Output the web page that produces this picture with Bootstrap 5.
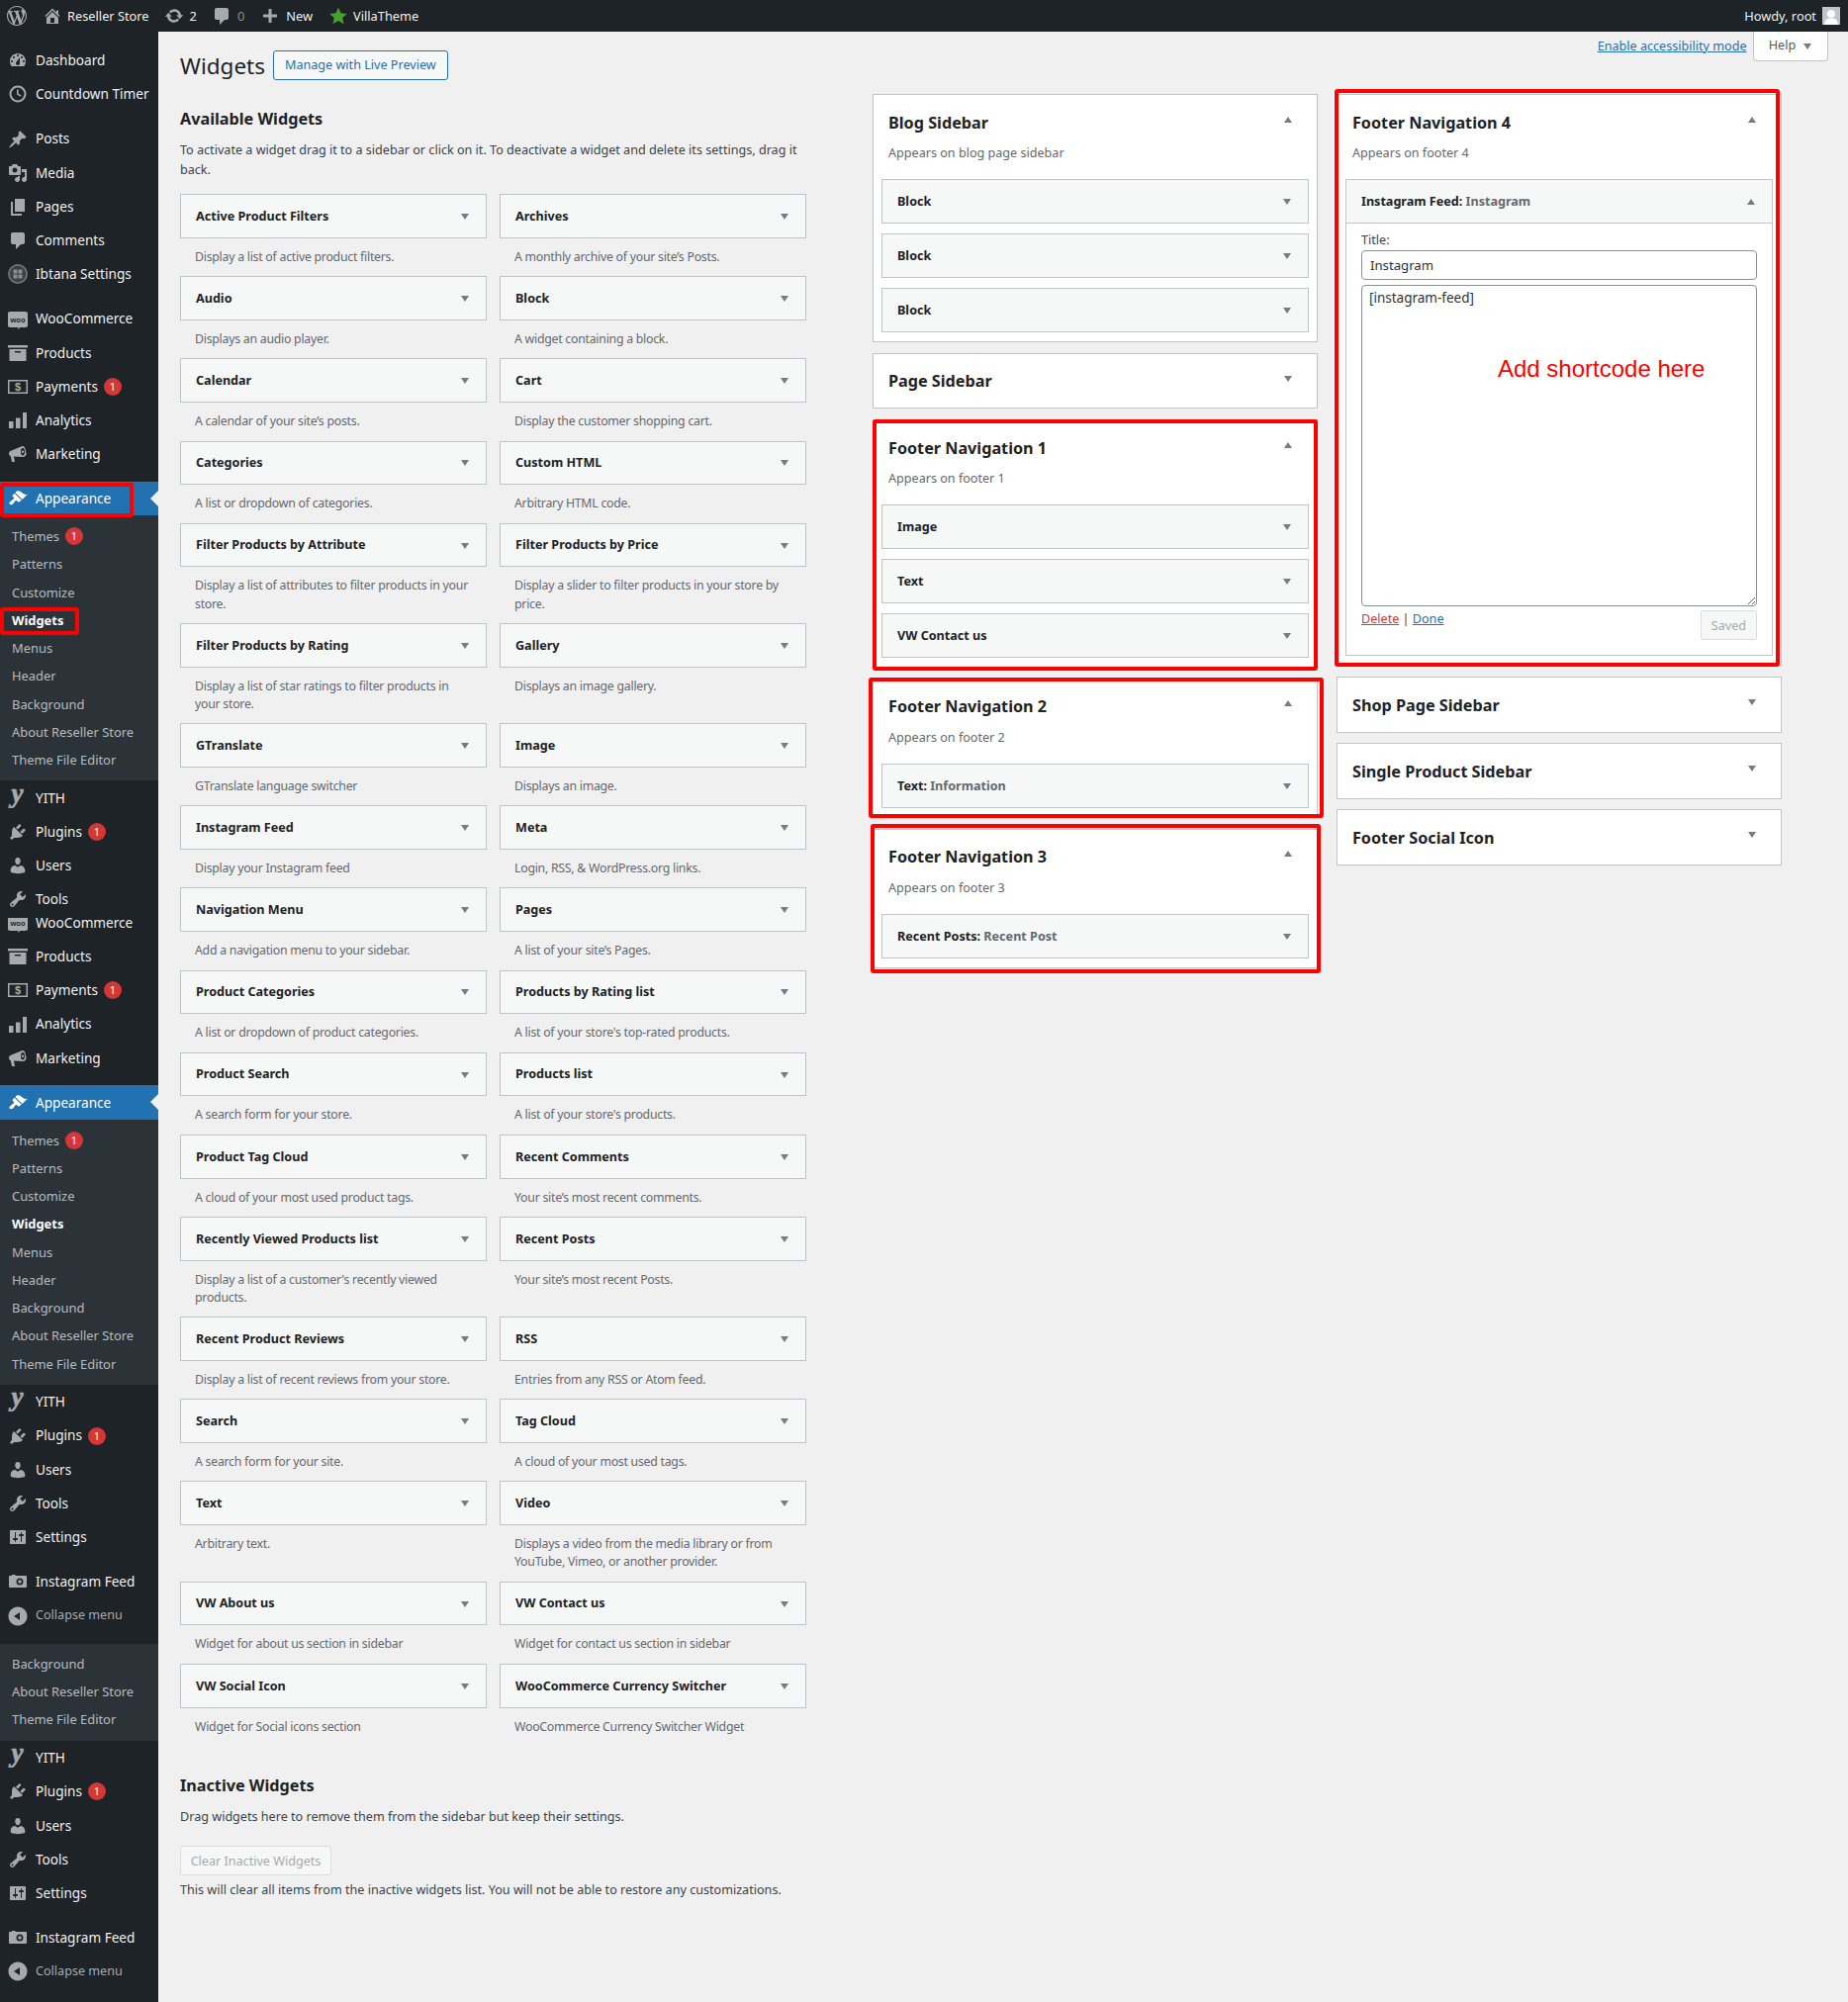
<!DOCTYPE html>
<html lang="en">

<head>
    <meta charset="UTF-8">
    <meta name="viewport" content="width=device-width, initial-scale=1">
    <title>Widgets</title>
    <link href="https://cdn.jsdelivr.net/npm/bootstrap@5.3.0/dist/css/bootstrap.min.css" rel="stylesheet">
    <style>
        body {
            font-family: "Noto Sans", "Open Sans", sans-serif;
            font-size: 12.6px;
            line-height: 18.2px;
            color: #3c434a;
            background-color: #f0f0f1;
        }

        /* top bar */
        .wp-bar {
            height: 32px;
            background: #1d2327;
            color: #f0f0f1;
            font-size: 12.8px;
        }

        .bar-ico {
            width: 20px;
            height: 20px;
            fill: #a7aaad;
        }

        .bar-star {
            fill: #46a02f;
        }

        .bar-dim {
            color: #8c8f94;
        }

        .bar-avatar {
            width: 18px;
            height: 18px;
            margin: 0 8px 0 6px;
        }

        .bl-5 { margin-left: 5px; }
        .bl-6 { margin-left: 6px; }
        .bl-7 { margin-left: 7px; }
        .bl-15 { margin-left: 15px; }
        .bl-16 { margin-left: 16px; }

        /* left menu */
        .wp-side {
            width: 160px;
            flex: none;
            background: #1d2327;
            padding-top: 11.6px;
            min-height: 1992px;
        }

        .mi {
            height: 34.2px;
            color: #f0f0f1;
            font-size: 13.6px;
            padding: 1px 0 0 8px;
            position: relative;
        }

        .mi svg {
            width: 20px;
            height: 20px;
            fill: #a7aaad;
            margin-right: 8px;
            flex: none;
        }

        .mi.is-open {
            background: #2271b1;
            color: #fff;
        }

        .mi.is-open svg {
            fill: #fff;
        }

        .mi.is-open::after {
            content: "";
            position: absolute;
            right: 0;
            top: 9px;
            border: 8px solid transparent;
            border-right-color: #f0f0f1;
            border-left-width: 0;
        }

        .mi-clip {
            height: 21.6px;
            margin-top: 2px;
            overflow: hidden;
        }

        .mi-clip .mi {
            flex: none;
            width: 100%;
        }

        .mi-sep {
            height: 11px;
        }

        .mi-gap {
            height: 11.4px;
        }

        .mi-small {
            font-size: 12.6px;
            color: #a7aaad;
        }

        .sub-menu {
            background: #2c3338;
            padding: 7px 0;
        }

        .sub-menu.is-cut {
            padding: 6px 0 7.4px;
        }

        .sub-item {
            height: 28.25px;
            padding-left: 12px;
            color: rgba(240, 246, 252, .7);
            font-size: 12.9px;
        }

        .sub-item.on {
            color: #fff;
            font-weight: 700;
        }

        .count-dot {
            width: 18px;
            height: 18px;
            border-radius: 50%;
            background: #d63638;
            color: #fff;
            font-size: 11px;
            line-height: 18px;
            text-align: center;
            margin-left: 6px;
        }

        /* page head */
        .page-head {
            height: 63px;
            padding-left: 22px;
        }

        .page-head h1 {
            font-size: 22.5px;
            font-weight: 400;
            line-height: 29px;
            margin: 19.5px 8px 0 0;
            color: #1d2327;
        }

        .live-btn {
            margin-top: 19px;
            height: 30px;
            padding: 0 11px;
            line-height: 28px;
            border: 1px solid #2271b1;
            border-radius: 3px;
            color: #2271b1;
            background: #f6f7f7;
        }

        .access-link {
            margin: 4.5px 6px 0 0;
            line-height: 20px;
            color: #2271b1;
        }

        .help-tab {
            width: 76px;
            height: 30px;
            margin-right: 20.5px;
            background: #fff;
            border: 1px solid #c3c4c7;
            border-top: 0;
            border-radius: 0 0 4px 4px;
            color: #50575e;
        }

        /* available widgets */
        .avail-col {
            width: 633px;
            margin-left: 22px;
            flex: none;
        }

        .block-title {
            font-size: 16.2px;
            font-weight: 700;
            line-height: 20px;
            color: #1d2327;
            margin: 15px 0 11px;
        }

        .block-text {
            line-height: 20px;
            margin: 0;
            padding-top: 1px;
            margin-bottom: -1px;
        }

        .avail-grid {
            display: grid;
            grid-template-columns: 310px 310px;
            column-gap: 13px;
            margin-top: 15.3px;
        }

        .wg-bar {
            height: 44.8px;
            padding: 1px 17px 0 15px;
            background: #f6f7f7;
            border: 1px solid #c3c4c7;
            font-weight: 700;
            color: #1d2327;
        }

        .wg-bar em {
            font-style: normal;
            color: #646970;
        }

        .wg-desc {
            margin: 0;
            padding: 10px 4px 10.1px 15px;
            color: #646970;
            font-size: 12.3px;
            letter-spacing: -.25px;
        }

        .tri-dn,
        .tri-up {
            width: 0;
            height: 0;
            border-left: 4px solid transparent;
            border-right: 4px solid transparent;
            flex: none;
        }

        .tri-dn {
            border-top: 6px solid #787c82;
        }

        .tri-up {
            border-bottom: 6px solid #787c82;
        }

        .tall-p {
            margin-top: 30.4px;
        }

        .clear-btn,
        .saved-btn {
            height: 29.7px;
            line-height: 27.7px;
            font-size: 12.6px;
            border: 1px solid #dcdcde;
            border-radius: 3px;
            background: #f6f7f7;
            color: #a7aaad;
        }

        .clear-btn {
            width: 153px;
            margin: 20px 0 4px;
        }

        /* sidebars */
        .sb-col {
            width: 449.6px;
            flex: none;
        }

        .sb-col.first {
            margin-left: 67px;
        }

        .sb-col.second {
            margin-left: 19.4px;
        }

        .sb-box {
            position: relative;
            background: #fff;
            border: 1px solid #c3c4c7;
            margin-bottom: 10.8px;
        }

        .sb-head {
            height: 54.3px;
            padding: 1px 25px 0 15px;
            font-size: 16.2px;
            font-weight: 700;
            color: #1d2327;
        }

        .sb-head i {
            margin-top: -6px;
        }

        .sb-note {
            margin: -4px 0 16.5px;
            padding-left: 15px;
            color: #646970;
        }

        .sb-list {
            padding: 0 8px;
        }

        .sb-list .wg-bar {
            margin-bottom: 10.2px;
        }

        .sb-list .wg-bar:last-child {
            margin-bottom: 9.3px;
        }

        .red-frame {
            position: absolute;
            border: 4px solid #f00;
            border-radius: 3px;
            pointer-events: none;
        }

        .red-side-a {
            left: 0;
            top: 455.5px;
            width: 135px;
            height: 35px;
        }

        .red-side-b {
            left: 0;
            top: 582px;
            width: 80px;
            height: 28px;
        }

        .rf-1 { top: -1px; left: -1px; right: -1px; bottom: -4px; }
        .rf-2 { top: -2px; left: -5px; right: -7px; bottom: -1px; }
        .rf-3 { top: -6px; left: -3px; right: -4px; bottom: -6px; }
        .rf-4 { top: -6px; left: -3px; right: 1px; bottom: -2px; }

        /* open widget */
        .iw-head {
            margin-bottom: 0 !important;
        }

        .iw-list {
            padding-bottom: 9.8px;
        }

        .iw-body {
            padding: 7.3px 15px 15px;
            border: 1px solid #c3c4c7;
            border-top: 0;
        }

        .iw-body label {
            padding-top: 1px;
            margin-bottom: -1px;
        }

        .iw-field {
            display: block;
            width: 100%;
            color: #2c3338;
            border: 1px solid #8c8f94;
            border-radius: 4px;
            font-family: inherit;
        }

        input.iw-field {
            height: 29.4px;
            padding: 0 8px;
            margin: 1px 0 5.6px;
            font-size: 13.2px;
        }

        .area-wrap {
            position: relative;
        }

        textarea.iw-field {
            height: 325px;
            padding: 3px 7px;
            line-height: 18px;
            font-size: 13.5px;
        }

        .shortcode-tip {
            position: absolute;
            left: 138px;
            top: 69px;
            font-family: "Liberation Sans", Arial, sans-serif;
            font-size: 24px;
            line-height: 32px;
            color: #f00;
            white-space: nowrap;
        }

        .iw-actions {
            margin-top: 3.7px;
        }

        .del-link {
            color: #d63638;
        }

        .done-link {
            color: #2271b1;
        }

        .saved-btn {
            width: 56.4px;
        }
    </style>
</head>

<body>
    <svg width="0" height="0" class="position-absolute">
        <defs>
            <symbol id="i-wp" viewBox="0 0 20 20"><path d="M20 10c0-5.51-4.49-10-10-10C4.48 0 0 4.49 0 10c0 5.52 4.48 10 10 10 5.51 0 10-4.48 10-10zM7.78 15.37L4.37 6.22c.55-.02 1.17-.08 1.17-.08.5-.06.44-1.13-.06-1.11 0 0-1.45.11-2.37.11-.18 0-.37 0-.58-.01C4.12 2.69 6.87 1.11 10 1.11c2.33 0 4.45.87 6.05 2.34-.68-.11-1.65.39-1.65 1.58 0 .74.45 1.36.9 2.1.35.61.55 1.36.55 2.46 0 1.49-1.4 5-1.4 5l-3.03-8.37c.54-.02.82-.17.82-.17.5-.05.44-1.25-.06-1.22 0 0-1.44.12-2.38.12-.87 0-2.33-.12-2.33-.12-.5-.03-.56 1.2-.06 1.22l.92.08 1.26 3.41zM17.41 10c.24-.64.74-1.87.43-4.25.7 1.29 1.05 2.71 1.05 4.25 0 3.29-1.73 6.24-4.4 7.78.97-2.59 1.94-5.2 2.92-7.78zM6.1 18.09C3.12 16.65 1.11 13.53 1.11 10c0-1.3.23-2.48.72-3.59C3.25 10.3 4.67 14.2 6.1 18.09zm4.03-6.63l2.58 6.98c-.86.29-1.76.45-2.71.45-.79 0-1.57-.11-2.29-.33.81-2.38 1.62-4.74 2.42-7.1z"/></symbol>
            <symbol id="i-home" viewBox="0 0 20 20"><path d="M16 8.5l1.53 1.53-1.06 1.06L10 4.62l-6.47 6.47-1.06-1.06L10 2.5l4 4v-2h2v4zm-6-2.46l6 5.99V18H4v-5.97zM12 17v-5H8v5h4z"/></symbol>
            <symbol id="i-update" viewBox="0 0 20 20"><path d="M10.2 3.28c3.53 0 6.43 2.61 6.92 6h2.08l-3.5 4-3.5-4h2.32c-.45-1.97-2.21-3.45-4.32-3.45-1.45 0-2.73.71-3.54 1.78L4.95 5.66C6.23 4.2 8.11 3.28 10.2 3.28zm-.4 13.44c-3.52 0-6.43-2.61-6.92-6H.8l3.5-4c1.17 1.33 2.33 2.67 3.5 4H5.48c.45 1.97 2.21 3.45 4.32 3.45 1.45 0 2.73-.71 3.54-1.78l1.71 1.95c-1.28 1.46-3.15 2.38-5.25 2.38z"/></symbol>
            <symbol id="i-comment" viewBox="0 0 20 20"><path d="M5 2h10c1.1 0 2 .9 2 2v8c0 1.1-.9 2-2 2h-2l-5 5v-5H5c-1.1 0-2-.9-2-2V4c0-1.1.9-2 2-2z"/></symbol>
            <symbol id="i-plus" viewBox="0 0 20 20"><path d="M17 8.5v3h-5.5V17h-3v-5.5H3v-3h5.5V3h3v5.5z"/></symbol>
            <symbol id="i-star" viewBox="0 0 20 20"><path d="M10 1.5l2.6 5.7 6.2.7-4.6 4.2 1.3 6.1L10 15.1l-5.5 3.1 1.3-6.1L1.2 7.900l6.2-.7z"/></symbol>
            <symbol id="i-dash" viewBox="0 0 20 20"><path fill-rule="evenodd" d="M3.76 16h12.48c1.1-1.37 1.76-3.11 1.76-5 0-4.42-3.58-8-8-8s-8 3.58-8 8c0 1.89.66 3.63 1.76 5zM10 4c.55 0 1 .45 1 1s-.45 1-1 1-1-.45-1-1 .45-1 1-1zM6 6c.55 0 1 .45 1 1s-.45 1-1 1-1-.45-1-1 .45-1 1-1zm8 0c.55 0 1 .45 1 1s-.45 1-1 1-1-.45-1-1 .45-1 1-1zm-5.37 5.55L12 7v6c0 1.1-.9 2-2 2s-2-.9-2-2c0-.57.24-1.08.63-1.45zM4 10c.55 0 1 .45 1 1s-.45 1-1 1-1-.45-1-1 .45-1 1-1zm12 0c.55 0 1 .45 1 1s-.45 1-1 1-1-.45-1-1 .45-1 1-1z"/></symbol>
            <symbol id="i-clock" viewBox="0 0 20 20"><path fill-rule="evenodd" d="M10 1.5a8.5 8.5 0 1 1 0 17 8.5 8.5 0 0 1 0-17zm0 2a6.5 6.5 0 1 0 0 13 6.5 6.5 0 0 0 0-13zM9 5.500h1.600v4.200l3 1.800-.8 1.300L9 10.500z"/></symbol>
            <symbol id="i-pin" viewBox="0 0 20 20"><path d="M10.44 3.02l1.82-1.82 6.36 6.35-1.83 1.82c-1.05-.68-2.48-.57-3.41.36l-.75.75c-.92.93-1.04 2.35-.35 3.41l-1.83 1.82-2.41-2.41-2.8 2.79c-.42.42-3.38 2.71-3.8 2.29s1.86-3.39 2.28-3.81l2.79-2.79L4.1 9.36l1.83-1.82c1.05.69 2.48.57 3.4-.36l.75-.75c.93-.92 1.05-2.35.36-3.41z"/></symbol>
            <symbol id="i-media" viewBox="0 0 20 20"><path fill-rule="evenodd" d="M13 11V4c0-.55-.45-1-1-1h-1.67L9 1H5L3.67 3H2c-.55 0-1 .45-1 1v7c0 .55.45 1 1 1h10c.55 0 1-.45 1-1zM7 4.5c1.38 0 2.5 1.12 2.5 2.5S8.38 9.5 7 9.5 4.5 8.38 4.5 7 5.62 4.5 7 4.5zM14 6h5v10.5c0 1.38-1.12 2.5-2.5 2.5S14 17.88 14 16.5s1.12-2.5 2.5-2.5c.17 0 .34.02.5.05V9h-3V6zm-4 8.05V13h2v3.5c0 1.38-1.12 2.5-2.5 2.5S7 17.88 7 16.5 8.12 14 9.5 14c.17 0 .34.02.5.05z"/></symbol>
            <symbol id="i-pages" viewBox="0 0 20 20"><path d="M7 2h10v13H7zM5 5v12h9v2H3V5z"/></symbol>
            <symbol id="i-ibtana" viewBox="0 0 20 20"><circle cx="10" cy="10" r="10" fill="#6f7478"/><circle cx="10" cy="10" r="8.2" fill="#3a4045"/><path fill="#8b8f93" d="M5.5 5.5h4v4h-4zm5 0h4v4h-4zm-5 5h4v4h-4zm5 0h4v4h-4z"/></symbol>
            <symbol id="i-woo" viewBox="0 0 20 20"><path d="M2 2h16c1.1 0 2 .9 2 2v12c0 1.1-.9 2-2 2h-6l-1.5 2L10 18H2c-1.1 0-2-.9-2-2V4c0-1.1.9-2 2-2z"/><text x="10" y="12.5" text-anchor="middle" font-family="Liberation Sans, sans-serif" font-size="7.5" font-weight="700" fill="#1d2327">woo</text></symbol>
            <symbol id="i-box" viewBox="0 0 20 20"><path fill-rule="evenodd" d="M0 2h20v2.5H0zM1.5 6h17v12h-17zM7 8v1.5h6V8z"/></symbol>
            <symbol id="i-pay" viewBox="0 0 20 20"><path fill-rule="evenodd" d="M0 3h20v14H0zm1.5 1.5v11h17v-11z"/><text x="10" y="14" text-anchor="middle" font-family="Liberation Sans, sans-serif" font-size="11" font-weight="700">$</text></symbol>
            <symbol id="i-bars" viewBox="0 0 20 20"><path d="M1 11h4.5v7H1zM8 7.5h4.5V18H8zM15 2h4v16h-4z"/></symbol>
            <symbol id="i-horn" viewBox="0 0 20 20"><path fill-rule="evenodd" d="M18 7.5a3.5 3.5 0 0 1-3 5.5L6 12.5l1 5.5H4l-1.200-5.800C1.700 11.800 1 10.800 1 9.500s.8-2.400 2-2.800L14 2.200c1.500-.6 3 .7 3.600 2.700.2.900.4 1.700.4 2.600zM15 4c-1.200 0-2 1.600-2 3.800s.8 3.700 2 3.700 2-1.500 2-3.700S16.200 4 15 4z"/><circle cx="15" cy="7.8" r="1.2"/></symbol>
            <symbol id="i-brush" viewBox="0 0 20 20"><path d="M14.48 11.06L7.41 3.99l1.5-1.5c.5-.56 2.3-.47 3.51.32 1.21.8 1.43 1.28 2.91 2.1 1.18.64 2.45 1.26 4.45.85zm-.71.71L6.7 4.7 4.93 6.47c-.39.39-.39 1.02 0 1.41l1.06 1.06c.39.39.39 1.03 0 1.42-.6.6-1.43 1.11-2.21 1.69-.35.26-.7.53-1.01.84C1.43 13.23.99 14.8 1.6 15.5c.6.7 2.15 1.28 3.48-.05.32-.31.58-.66.84-1.01.58-.78 1.09-1.61 1.69-2.21.39-.39 1.02-.39 1.41 0l1.06 1.06c.39.39 1.02.39 1.41 0z"/></symbol>
            <symbol id="i-yith" viewBox="0 0 20 20"><text x="9.5" y="13.5" text-anchor="middle" font-family="Liberation Serif, serif" font-size="27" font-weight="700" font-style="italic" stroke="#a7aaad" stroke-width=".7">y</text></symbol>
            <symbol id="i-plug" viewBox="0 0 20 20"><path d="M13.11 4.36L9.87 7.6 8 5.73l3.24-3.24c.35-.34 1.05-.2 1.56.32.52.51.66 1.21.31 1.55zm-8 1.77l.91-1.12 9.01 9.01-1.19.84c-.71.71-2.63 1.16-3.82 1.16H6.14L4.9 17.26c-.59.59-1.54.59-2.12 0-.59-.58-.59-1.53 0-2.12l1.24-1.24v-3.88c0-1.13.4-3.19 1.09-3.89zm7.26 3.97l3.24-3.24c.34-.35 1.04-.21 1.55.31.52.51.66 1.21.31 1.55l-3.24 3.25z"/></symbol>
            <symbol id="i-user" viewBox="0 0 20 20"><path d="M10 9.25c-2.27 0-2.73-3.44-2.73-3.44C7 4.02 7.82 2 9.97 2c2.16 0 2.98 2.02 2.71 3.81 0 0-.41 3.44-2.68 3.44zm0 2.57L12.72 10c2.39 0 4.52 2.33 4.52 4.53v2.49s-3.65 1.13-7.24 1.13c-3.65 0-7.24-1.13-7.24-1.13v-2.49c0-2.25 1.94-4.48 4.47-4.48z"/></symbol>
            <symbol id="i-tool" viewBox="0 0 20 20"><path fill-rule="evenodd" d="M16.68 9.77c-1.34 1.34-3.3 1.67-4.95.99l-5.41 6.52c-.99.99-2.59.99-3.58 0s-.99-2.59 0-3.57l6.52-5.42c-.68-1.65-.35-3.61.99-4.95 1.28-1.28 3.12-1.62 4.72-1.06l-2.89 2.89 2.82 2.82 2.86-2.87c.53 1.58.18 3.39-1.08 4.65zM3.81 16.21c.4.39 1.04.39 1.43 0 .4-.4.4-1.04 0-1.43-.39-.4-1.03-.4-1.43 0-.39.39-.39 1.03 0 1.43z"/></symbol>
            <symbol id="i-set" viewBox="0 0 20 20"><path fill-rule="evenodd" d="M18 16V4c0-.55-.45-1-1-1H3c-.55 0-1 .45-1 1v12c0 .55.45 1 1 1h14c.55 0 1-.45 1-1zM8 11h1c.55 0 1 .45 1 1s-.45 1-1 1H8v1.5c0 .28-.22.5-.5.5s-.5-.22-.5-.5V13H6c-.55 0-1-.45-1-1s.45-1 1-1h1V5.5c0-.28.22-.5.5-.5s.5.22.5.5V11zm5-2h-1c-.55 0-1-.45-1-1s.45-1 1-1h1V5.5c0-.28.22-.5.5-.5s.5.22.5.5V7h1c.55 0 1 .45 1 1s-.45 1-1 1h-1v5.5c0 .28-.22.5-.5.5s-.5-.22-.5-.5V9z"/></symbol>
            <symbol id="i-cam" viewBox="0 0 20 20"><path fill-rule="evenodd" d="M2 4h2V3h3l1 1h10c.6 0 1 .4 1 1v10c0 .6-.4 1-1 1H2c-.6 0-1-.4-1-1V5c0-.6.4-1 1-1zm10 2.5a3.5 3.5 0 1 0 0 7 3.5 3.5 0 0 0 0-7z"/><circle cx="12" cy="10" r="1.8"/></symbol>
            <symbol id="i-back" viewBox="0 0 20 20"><path fill-rule="evenodd" d="M10 .5c5.22 0 9.5 4.28 9.5 9.5s-4.28 9.5-9.5 9.5S.5 15.22.5 10 4.78.5 10 .5zM12 14V6l-6 4z"/></symbol>
        </defs>
    </svg>

    <!-- top admin bar -->
    <div class="wp-bar d-flex align-items-center">
        <svg class="bar-ico bl-7"><use href="#i-wp"/></svg>
        <svg class="bar-ico bl-16"><use href="#i-home"/></svg>
        <span class="bl-5">Reseller Store</span>
        <svg class="bar-ico bl-15"><use href="#i-update"/></svg>
        <span class="bl-6">2</span>
        <svg class="bar-ico bl-15"><use href="#i-comment"/></svg>
        <span class="bar-dim bl-6">0</span>
        <svg class="bar-ico bl-16"><use href="#i-plus"/></svg>
        <span class="bl-6">New</span>
        <svg class="bar-ico bar-star bl-16"><use href="#i-star"/></svg>
        <span class="bl-5">VillaTheme</span>
        <span class="ms-auto">Howdy, root</span>
        <svg class="bar-avatar" viewBox="0 0 18 18"><rect width="18" height="18" fill="#c3c4c7"/><circle cx="9" cy="7" r="4" fill="#fff"/><path d="M2 18c0-5 3-6.5 7-6.5s7 1.5 7 6.5z" fill="#fff"/></svg>
    </div>

    <div class="d-flex position-relative">
        <!-- left menu -->
        <nav class="wp-side">
            <div class="mi d-flex align-items-center"><svg><use href="#i-dash"/></svg>Dashboard</div>
            <div class="mi d-flex align-items-center"><svg><use href="#i-clock"/></svg>Countdown Timer</div>
            <div class="mi-sep"></div>
            <div class="mi d-flex align-items-center"><svg><use href="#i-pin"/></svg>Posts</div>
            <div class="mi d-flex align-items-center"><svg><use href="#i-media"/></svg>Media</div>
            <div class="mi d-flex align-items-center"><svg><use href="#i-pages"/></svg>Pages</div>
            <div class="mi d-flex align-items-center"><svg><use href="#i-comment"/></svg>Comments</div>
            <div class="mi d-flex align-items-center"><svg><use href="#i-ibtana"/></svg>Ibtana Settings</div>
            <div class="mi-sep"></div>
            <div class="mi d-flex align-items-center"><svg><use href="#i-woo"/></svg>WooCommerce</div>
            <div class="mi d-flex align-items-center"><svg><use href="#i-box"/></svg>Products</div>
            <div class="mi d-flex align-items-center"><svg><use href="#i-pay"/></svg>Payments<span class="count-dot">1</span></div>
            <div class="mi d-flex align-items-center"><svg><use href="#i-bars"/></svg>Analytics</div>
            <div class="mi d-flex align-items-center"><svg><use href="#i-horn"/></svg>Marketing</div>
            <div class="mi-sep"></div>
            <div class="mi is-open d-flex align-items-center"><svg><use href="#i-brush"/></svg>Appearance</div>
            <div class="sub-menu">
                <div class="sub-item d-flex align-items-center">Themes<span class="count-dot">1</span></div>
                <div class="sub-item d-flex align-items-center">Patterns</div>
                <div class="sub-item d-flex align-items-center">Customize</div>
                <div class="sub-item on d-flex align-items-center">Widgets</div>
                <div class="sub-item d-flex align-items-center">Menus</div>
                <div class="sub-item d-flex align-items-center">Header</div>
                <div class="sub-item d-flex align-items-center">Background</div>
                <div class="sub-item d-flex align-items-center">About Reseller Store</div>
                <div class="sub-item d-flex align-items-center">Theme File Editor</div>
            </div>
            <div class="mi d-flex align-items-center"><svg><use href="#i-yith"/></svg>YITH</div>
            <div class="mi d-flex align-items-center"><svg><use href="#i-plug"/></svg>Plugins<span class="count-dot">1</span></div>
            <div class="mi d-flex align-items-center"><svg><use href="#i-user"/></svg>Users</div>
            <div class="mi d-flex align-items-center"><svg><use href="#i-tool"/></svg>Tools</div>

            <!-- the screenshot is stitched here, the next row is cut off at the top -->
            <div class="mi-clip d-flex align-items-end">
                <div class="mi d-flex align-items-center"><svg><use href="#i-woo"/></svg>WooCommerce</div>
            </div>
            <div class="mi d-flex align-items-center"><svg><use href="#i-box"/></svg>Products</div>
            <div class="mi d-flex align-items-center"><svg><use href="#i-pay"/></svg>Payments<span class="count-dot">1</span></div>
            <div class="mi d-flex align-items-center"><svg><use href="#i-bars"/></svg>Analytics</div>
            <div class="mi d-flex align-items-center"><svg><use href="#i-horn"/></svg>Marketing</div>
            <div class="mi-sep"></div>
            <div class="mi is-open d-flex align-items-center"><svg><use href="#i-brush"/></svg>Appearance</div>
            <div class="sub-menu">
                <div class="sub-item d-flex align-items-center">Themes<span class="count-dot">1</span></div>
                <div class="sub-item d-flex align-items-center">Patterns</div>
                <div class="sub-item d-flex align-items-center">Customize</div>
                <div class="sub-item on d-flex align-items-center">Widgets</div>
                <div class="sub-item d-flex align-items-center">Menus</div>
                <div class="sub-item d-flex align-items-center">Header</div>
                <div class="sub-item d-flex align-items-center">Background</div>
                <div class="sub-item d-flex align-items-center">About Reseller Store</div>
                <div class="sub-item d-flex align-items-center">Theme File Editor</div>
            </div>
            <div class="mi d-flex align-items-center"><svg><use href="#i-yith"/></svg>YITH</div>
            <div class="mi d-flex align-items-center"><svg><use href="#i-plug"/></svg>Plugins<span class="count-dot">1</span></div>
            <div class="mi d-flex align-items-center"><svg><use href="#i-user"/></svg>Users</div>
            <div class="mi d-flex align-items-center"><svg><use href="#i-tool"/></svg>Tools</div>
            <div class="mi d-flex align-items-center"><svg><use href="#i-set"/></svg>Settings</div>
            <div class="mi-sep"></div>
            <div class="mi d-flex align-items-center"><svg><use href="#i-cam"/></svg>Instagram Feed</div>
            <div class="mi mi-small d-flex align-items-center"><svg><use href="#i-back"/></svg>Collapse menu</div>
            <div class="mi-gap"></div>

            <div class="sub-menu is-cut">
                <div class="sub-item d-flex align-items-center">Background</div>
                <div class="sub-item d-flex align-items-center">About Reseller Store</div>
                <div class="sub-item d-flex align-items-center">Theme File Editor</div>
            </div>
            <div class="mi d-flex align-items-center"><svg><use href="#i-yith"/></svg>YITH</div>
            <div class="mi d-flex align-items-center"><svg><use href="#i-plug"/></svg>Plugins<span class="count-dot">1</span></div>
            <div class="mi d-flex align-items-center"><svg><use href="#i-user"/></svg>Users</div>
            <div class="mi d-flex align-items-center"><svg><use href="#i-tool"/></svg>Tools</div>
            <div class="mi d-flex align-items-center"><svg><use href="#i-set"/></svg>Settings</div>
            <div class="mi-sep"></div>
            <div class="mi d-flex align-items-center"><svg><use href="#i-cam"/></svg>Instagram Feed</div>
            <div class="mi mi-small d-flex align-items-center"><svg><use href="#i-back"/></svg>Collapse menu</div>
        </nav>

        <!-- annotations on the menu -->
        <div class="red-frame red-side-a"></div>
        <div class="red-frame red-side-b"></div>

        <main class="flex-grow-1">
            <div class="page-head d-flex align-items-start">
                <h1>Widgets</h1>
                <a class="live-btn text-decoration-none">Manage with Live Preview</a>
                <a class="access-link ms-auto" href="#">Enable accessibility mode</a>
                <div class="help-tab d-flex align-items-center justify-content-center gap-2">Help <i class="tri-dn"></i></div>
            </div>

            <div class="d-flex align-items-start">
                <div class="avail-col">
                    <h2 class="block-title">Available Widgets</h2>
                    <p class="block-text">To activate a widget drag it to a sidebar or click on it. To deactivate a widget and delete its settings, drag it<br>back.</p>

                    <div class="avail-grid">
                        <div><div class="wg-bar d-flex align-items-center justify-content-between">Active Product Filters<i class="tri-dn"></i></div><p class="wg-desc">Display a list of active product filters.</p></div>
                        <div><div class="wg-bar d-flex align-items-center justify-content-between">Archives<i class="tri-dn"></i></div><p class="wg-desc">A monthly archive of your site’s Posts.</p></div>
                        <div><div class="wg-bar d-flex align-items-center justify-content-between">Audio<i class="tri-dn"></i></div><p class="wg-desc">Displays an audio player.</p></div>
                        <div><div class="wg-bar d-flex align-items-center justify-content-between">Block<i class="tri-dn"></i></div><p class="wg-desc">A widget containing a block.</p></div>
                        <div><div class="wg-bar d-flex align-items-center justify-content-between">Calendar<i class="tri-dn"></i></div><p class="wg-desc">A calendar of your site’s posts.</p></div>
                        <div><div class="wg-bar d-flex align-items-center justify-content-between">Cart<i class="tri-dn"></i></div><p class="wg-desc">Display the customer shopping cart.</p></div>
                        <div><div class="wg-bar d-flex align-items-center justify-content-between">Categories<i class="tri-dn"></i></div><p class="wg-desc">A list or dropdown of categories.</p></div>
                        <div><div class="wg-bar d-flex align-items-center justify-content-between">Custom HTML<i class="tri-dn"></i></div><p class="wg-desc">Arbitrary HTML code.</p></div>
                        <div><div class="wg-bar d-flex align-items-center justify-content-between">Filter Products by Attribute<i class="tri-dn"></i></div><p class="wg-desc">Display a list of attributes to filter products in your<br>store.</p></div>
                        <div><div class="wg-bar d-flex align-items-center justify-content-between">Filter Products by Price<i class="tri-dn"></i></div><p class="wg-desc">Display a slider to filter products in your store by<br>price.</p></div>
                        <div><div class="wg-bar d-flex align-items-center justify-content-between">Filter Products by Rating<i class="tri-dn"></i></div><p class="wg-desc">Display a list of star ratings to filter products in<br>your store.</p></div>
                        <div><div class="wg-bar d-flex align-items-center justify-content-between">Gallery<i class="tri-dn"></i></div><p class="wg-desc">Displays an image gallery.</p></div>
                        <div><div class="wg-bar d-flex align-items-center justify-content-between">GTranslate<i class="tri-dn"></i></div><p class="wg-desc">GTranslate language switcher</p></div>
                        <div><div class="wg-bar d-flex align-items-center justify-content-between">Image<i class="tri-dn"></i></div><p class="wg-desc">Displays an image.</p></div>
                        <div><div class="wg-bar d-flex align-items-center justify-content-between">Instagram Feed<i class="tri-dn"></i></div><p class="wg-desc">Display your Instagram feed</p></div>
                        <div><div class="wg-bar d-flex align-items-center justify-content-between">Meta<i class="tri-dn"></i></div><p class="wg-desc">Login, RSS, &amp; WordPress.org links.</p></div>
                        <div><div class="wg-bar d-flex align-items-center justify-content-between">Navigation Menu<i class="tri-dn"></i></div><p class="wg-desc">Add a navigation menu to your sidebar.</p></div>
                        <div><div class="wg-bar d-flex align-items-center justify-content-between">Pages<i class="tri-dn"></i></div><p class="wg-desc">A list of your site’s Pages.</p></div>
                        <div><div class="wg-bar d-flex align-items-center justify-content-between">Product Categories<i class="tri-dn"></i></div><p class="wg-desc">A list or dropdown of product categories.</p></div>
                        <div><div class="wg-bar d-flex align-items-center justify-content-between">Products by Rating list<i class="tri-dn"></i></div><p class="wg-desc">A list of your store's top-rated products.</p></div>
                        <div><div class="wg-bar d-flex align-items-center justify-content-between">Product Search<i class="tri-dn"></i></div><p class="wg-desc">A search form for your store.</p></div>
                        <div><div class="wg-bar d-flex align-items-center justify-content-between">Products list<i class="tri-dn"></i></div><p class="wg-desc">A list of your store's products.</p></div>
                        <div><div class="wg-bar d-flex align-items-center justify-content-between">Product Tag Cloud<i class="tri-dn"></i></div><p class="wg-desc">A cloud of your most used product tags.</p></div>
                        <div><div class="wg-bar d-flex align-items-center justify-content-between">Recent Comments<i class="tri-dn"></i></div><p class="wg-desc">Your site’s most recent comments.</p></div>
                        <div><div class="wg-bar d-flex align-items-center justify-content-between">Recently Viewed Products list<i class="tri-dn"></i></div><p class="wg-desc">Display a list of a customer's recently viewed<br>products.</p></div>
                        <div><div class="wg-bar d-flex align-items-center justify-content-between">Recent Posts<i class="tri-dn"></i></div><p class="wg-desc">Your site’s most recent Posts.</p></div>
                        <div><div class="wg-bar d-flex align-items-center justify-content-between">Recent Product Reviews<i class="tri-dn"></i></div><p class="wg-desc">Display a list of recent reviews from your store.</p></div>
                        <div><div class="wg-bar d-flex align-items-center justify-content-between">RSS<i class="tri-dn"></i></div><p class="wg-desc">Entries from any RSS or Atom feed.</p></div>
                        <div><div class="wg-bar d-flex align-items-center justify-content-between">Search<i class="tri-dn"></i></div><p class="wg-desc">A search form for your site.</p></div>
                        <div><div class="wg-bar d-flex align-items-center justify-content-between">Tag Cloud<i class="tri-dn"></i></div><p class="wg-desc">A cloud of your most used tags.</p></div>
                        <div><div class="wg-bar d-flex align-items-center justify-content-between">Text<i class="tri-dn"></i></div><p class="wg-desc">Arbitrary text.</p></div>
                        <div><div class="wg-bar d-flex align-items-center justify-content-between">Video<i class="tri-dn"></i></div><p class="wg-desc">Displays a video from the media library or from<br>YouTube, Vimeo, or another provider.</p></div>
                        <div><div class="wg-bar d-flex align-items-center justify-content-between">VW About us<i class="tri-dn"></i></div><p class="wg-desc">Widget for about us section in sidebar</p></div>
                        <div><div class="wg-bar d-flex align-items-center justify-content-between">VW Contact us<i class="tri-dn"></i></div><p class="wg-desc">Widget for contact us section in sidebar</p></div>
                        <div><div class="wg-bar d-flex align-items-center justify-content-between">VW Social Icon<i class="tri-dn"></i></div><p class="wg-desc">Widget for Social icons section</p></div>
                        <div><div class="wg-bar d-flex align-items-center justify-content-between">WooCommerce Currency Switcher<i class="tri-dn"></i></div><p class="wg-desc">WooCommerce Currency Switcher Widget</p></div>
                    </div>

                    <h2 class="block-title tall-p">Inactive Widgets</h2>
                    <p class="block-text">Drag widgets here to remove them from the sidebar but keep their settings.</p>
                    <button class="clear-btn d-block" type="button">Clear Inactive Widgets</button>
                    <p class="block-text">This will clear all items from the inactive widgets list. You will not be able to restore any customizations.</p>
                </div>

                <!-- first sidebar column -->
                <div class="sb-col first">
                    <section class="sb-box">
                        <div class="sb-head d-flex align-items-center justify-content-between">Blog Sidebar<i class="tri-up"></i></div>
                        <p class="sb-note">Appears on blog page sidebar</p>
                        <div class="sb-list">
                            <div class="wg-bar d-flex align-items-center justify-content-between">Block<i class="tri-dn"></i></div>
                            <div class="wg-bar d-flex align-items-center justify-content-between">Block<i class="tri-dn"></i></div>
                            <div class="wg-bar d-flex align-items-center justify-content-between">Block<i class="tri-dn"></i></div>
                        </div>
                    </section>
                    <section class="sb-box">
                        <div class="sb-head d-flex align-items-center justify-content-between">Page Sidebar<i class="tri-dn"></i></div>
                    </section>
                    <section class="sb-box">
                        <div class="sb-head d-flex align-items-center justify-content-between">Footer Navigation 1<i class="tri-up"></i></div>
                        <p class="sb-note">Appears on footer 1</p>
                        <div class="sb-list">
                            <div class="wg-bar d-flex align-items-center justify-content-between">Image<i class="tri-dn"></i></div>
                            <div class="wg-bar d-flex align-items-center justify-content-between">Text<i class="tri-dn"></i></div>
                            <div class="wg-bar d-flex align-items-center justify-content-between">VW Contact us<i class="tri-dn"></i></div>
                        </div>
                        <div class="red-frame rf-1"></div>
                    </section>
                    <section class="sb-box">
                        <div class="sb-head d-flex align-items-center justify-content-between">Footer Navigation 2<i class="tri-up"></i></div>
                        <p class="sb-note">Appears on footer 2</p>
                        <div class="sb-list">
                            <div class="wg-bar d-flex align-items-center justify-content-between"><span>Text: <em>Information</em></span><i class="tri-dn"></i></div>
                        </div>
                        <div class="red-frame rf-2"></div>
                    </section>
                    <section class="sb-box">
                        <div class="sb-head d-flex align-items-center justify-content-between">Footer Navigation 3<i class="tri-up"></i></div>
                        <p class="sb-note">Appears on footer 3</p>
                        <div class="sb-list">
                            <div class="wg-bar d-flex align-items-center justify-content-between"><span>Recent Posts: <em>Recent Post</em></span><i class="tri-dn"></i></div>
                        </div>
                        <div class="red-frame rf-3"></div>
                    </section>
                </div>

                <!-- second sidebar column -->
                <div class="sb-col second">
                    <section class="sb-box">
                        <div class="sb-head d-flex align-items-center justify-content-between">Footer Navigation 4<i class="tri-up"></i></div>
                        <p class="sb-note">Appears on footer 4</p>
                        <div class="sb-list iw-list">
                            <div class="wg-bar iw-head d-flex align-items-center justify-content-between"><span>Instagram Feed: <em>Instagram</em></span><i class="tri-up"></i></div>
                            <div class="iw-body">
                                <label>Title:</label>
                                <input class="iw-field" type="text" value="Instagram">
                                <div class="area-wrap">
                                    <textarea class="iw-field">[instagram-feed]</textarea>
                                    <span class="shortcode-tip">Add shortcode here</span>
                                </div>
                                <div class="iw-actions d-flex justify-content-between align-items-start">
                                    <span><a class="del-link" href="#">Delete</a> | <a class="done-link" href="#">Done</a></span>
                                    <button class="saved-btn" type="button">Saved</button>
                                </div>
                            </div>
                        </div>
                        <div class="red-frame rf-4"></div>
                    </section>
                    <section class="sb-box">
                        <div class="sb-head d-flex align-items-center justify-content-between">Shop Page Sidebar<i class="tri-dn"></i></div>
                    </section>
                    <section class="sb-box">
                        <div class="sb-head d-flex align-items-center justify-content-between">Single Product Sidebar<i class="tri-dn"></i></div>
                    </section>
                    <section class="sb-box">
                        <div class="sb-head d-flex align-items-center justify-content-between">Footer Social Icon<i class="tri-dn"></i></div>
                    </section>
                </div>
            </div>
        </main>
    </div>

    <script src="https://cdn.jsdelivr.net/npm/bootstrap@5.3.0/dist/js/bootstrap.bundle.min.js"></script>
</body>

</html>
